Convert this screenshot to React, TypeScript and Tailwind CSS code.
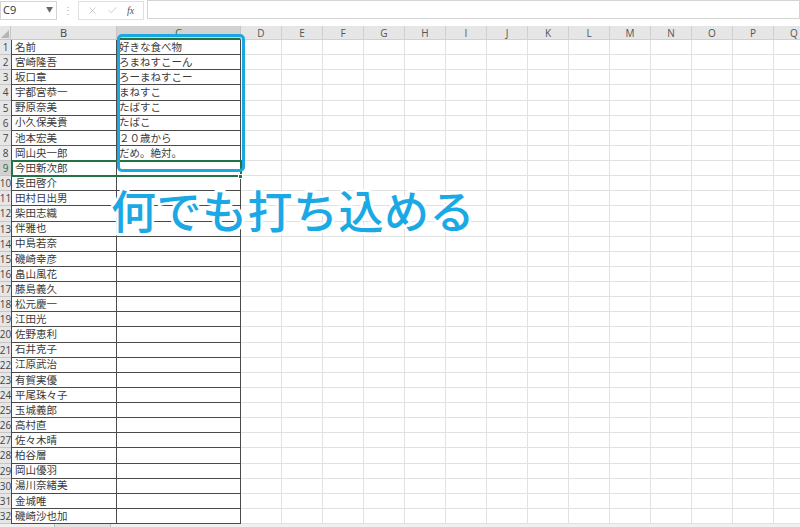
import { X, Check } from 'lucide-react'

const rows: [string, string][] = [
  ['名前', '好きな食べ物'],
  ['宮崎隆吾', 'ろまねすこーん'],
  ['坂口章', 'ろーまねすこー'],
  ['宇都宮恭一', 'まねすこ'],
  ['野原奈美', 'たばすこ'],
  ['小久保美貴', 'たばこ'],
  ['池本宏美', '２０歳から'],
  ['岡山央一郎', 'だめ。絶対。'],
  ['今田新次郎', ''],
  ['長田啓介', ''],
  ['田村日出男', ''],
  ['柴田志織', ''],
  ['伴雅也', ''],
  ['中島若奈', ''],
  ['磯崎幸彦', ''],
  ['畠山風花', ''],
  ['藤島義久', ''],
  ['松元慶一', ''],
  ['江田光', ''],
  ['佐野恵利', ''],
  ['石井克子', ''],
  ['江原武治', ''],
  ['有賀実優', ''],
  ['平尾珠々子', ''],
  ['玉城義郎', ''],
  ['高村直', ''],
  ['佐々木晴', ''],
  ['柏谷層', ''],
  ['岡山優羽', ''],
  ['湯川奈緒美', ''],
  ['金城唯', ''],
  ['磯崎沙也加', ''],
]

const cols = ['D', 'E', 'F', 'G', 'H', 'I', 'J', 'K', 'L', 'M', 'N', 'O', 'P', 'Q']

const jp = "font-['Noto_Sans_CJK_JP','Noto_Sans',sans-serif]"

export default function App() {
  return (
    <div className="relative w-[800px] h-[527px] overflow-hidden bg-white font-['Open_Sans','Noto_Sans_CJK_JP',sans-serif]">
      {/* formula bar */}
      <div className="flex h-[26px] items-start">
        <div className="mt-[1px] flex h-[19px] w-[57px] items-center justify-between border border-[#d4d4d4] bg-white pl-[2px] pr-[3px] text-[11px] text-[#333]">
          <span>C9</span>
          <span className="text-[7px] text-[#666]">▼</span>
        </div>
        <div className="mt-[3px] w-[21px] text-center text-[10px] leading-[14px] text-[#b0b0b0]">⋮</div>
        <div className="mt-[1px] flex h-[19px] w-[66px] items-center gap-[9px] border border-[#e0e0e0] bg-white pl-[8px] text-[#b8b8b8]">
          <X size={11} strokeWidth={1.5} />
          <Check size={11} strokeWidth={1.5} />
          <span className="font-['Liberation_Serif',serif] text-[10px] italic text-[#555]">fx</span>
        </div>
        <div className="ml-[3px] h-[19px] flex-1 border border-[#d4d4d4] bg-white" />
      </div>

      {/* sheet grid */}
      <div className="grid grid-cols-[11px_106px_124px_repeat(14,41px)] grid-rows-[14px_repeat(32,15.125px)] text-[11px]">
        {/* header row */}
        <div className="relative border-b border-r border-[#c6c6c6] bg-[#e6e6e6]">
          <svg className="absolute bottom-[1px] right-[1px]" width="8" height="8">
            <polygon points="8,0 8,8 0,8" fill="#b4b4b4" />
          </svg>
        </div>
        <div className="flex items-center justify-center border-b border-r border-[#c6c6c6] bg-[#e6e6e6] text-[11px] leading-none text-[#444]">B</div>
        <div className="flex items-center justify-center border-b-2 border-r border-b-[#217346] border-r-[#c6c6c6] bg-[#d2d2d2] text-[11px] leading-none text-[#217346]">C</div>
        {cols.map((c) => (
          <div key={c} className="flex items-center justify-center border-b border-r border-[#d0d0d0] bg-[#e6e6e6] text-[10px] leading-none text-[#555]">
            {c}
          </div>
        ))}

        {rows.map(([name, food], i) => {
          const n = i + 1
          const sel = n === 9
          return [
            <div
              key={`h${n}`}
              className={`flex items-center justify-center overflow-visible whitespace-nowrap border-b border-[#c6c6c6] text-[10px] leading-none ${sel ? 'bg-[#d2d2d2] text-[#217346]' : 'bg-[#e6e6e6] text-[#444]'}`}
            >
              {n}
            </div>,
            <div key={`b${n}`} className={`flex items-center whitespace-nowrap border-b border-l border-r border-[#4a4a4a] pl-[3px] text-[10.5px] leading-none text-[#3a3a3a] ${jp}`}>
              {name}
            </div>,
            <div key={`c${n}`} className={`flex items-center whitespace-nowrap border-b border-r border-[#4a4a4a] pl-[2px] text-[10.5px] leading-none text-[#3a3a3a] ${jp}`}>
              {food}
            </div>,
            ...cols.map((c) => <div key={`${c}${n}`} className="border-b border-r border-[#e1e1e1]" />),
          ]
        })}
      </div>

      {/* bottom strip */}
      <div className="absolute bottom-0 left-0 flex h-[3px] w-full bg-[#e3e3e3]">
        <div className="w-[55px] border-r border-[#bdbdbd] bg-[#f0f0f0]" />
        <div className="ml-[55px] w-[690px] border-l border-[#bdbdbd] bg-[#f0f0f0]" />
      </div>

      {/* selection B9:C9 */}
      <div className="absolute left-[11px] top-[160px] h-[17px] w-[231px] border-2 border-[#217346]" />
      <div className="absolute left-[238px] top-[174px] h-[5px] w-[5px] border border-white bg-[#217346]" />

      {/* annotation */}
      <div className="absolute left-[117px] top-[34px] h-[138px] w-[128px] rounded-[5px] border-[3px] border-[#1ba8e2]" />
      <div
        className={`absolute left-[111px] top-[180px] whitespace-nowrap text-[45px] font-medium leading-[60px] tracking-[0.5px] text-[#1aa9e4] [-webkit-text-stroke:5px_white] [paint-order:stroke_fill] ${jp}`}
      >
        何でも打ち込める
      </div>
    </div>
  )
}
